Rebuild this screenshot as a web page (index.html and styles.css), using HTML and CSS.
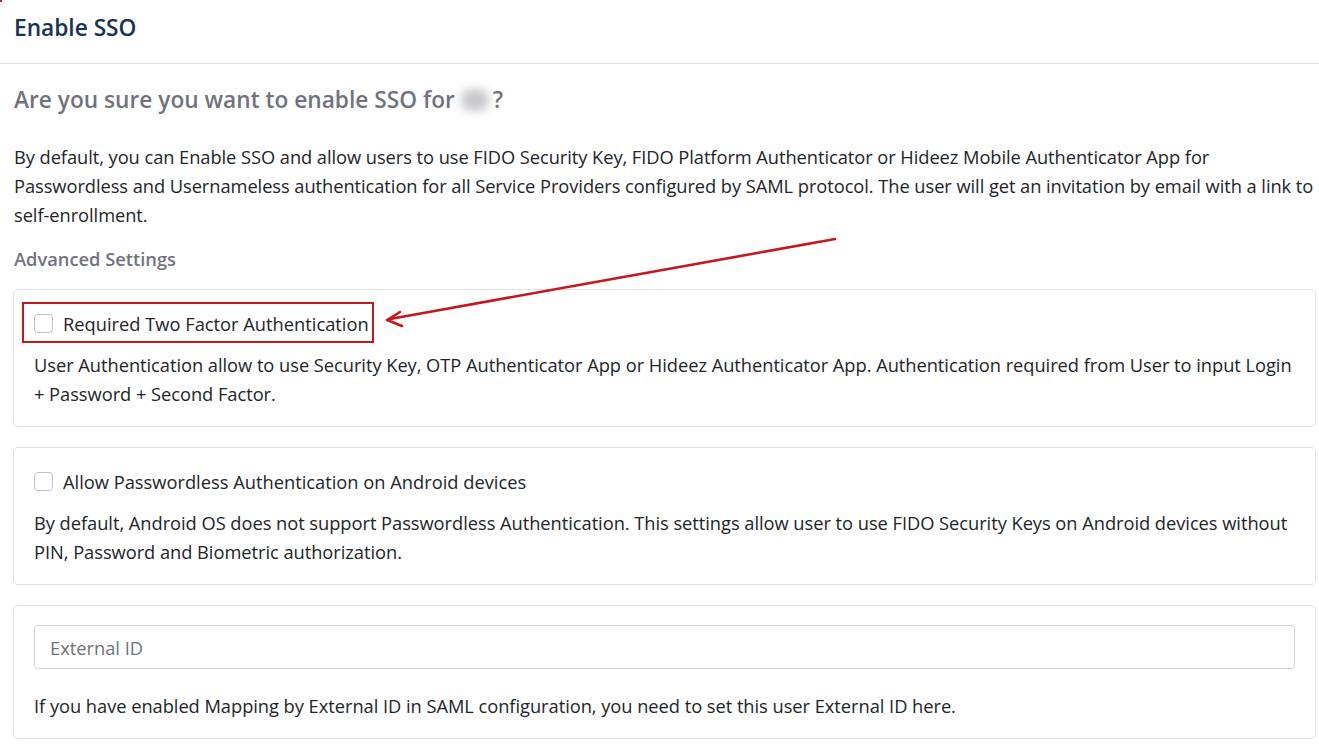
FILE: index.html
```html
<!DOCTYPE html>
<html lang="en">
<head>
<meta charset="utf-8">
<title>Enable SSO</title>
<link rel="stylesheet" href="styles.css">
</head>
<body>
<div class="dialog">
  <header class="dialog-header">
    <h1 class="dialog-title">Enable SSO</h1>
  </header>
  <main class="dialog-body">
    <h2 class="question">Are you sure you want to enable SSO for<span class="blurred" aria-hidden="true"></span>?</h2>
    <p class="intro">By default, you can Enable SSO and allow users to use FIDO Security Key, FIDO Platform Authenticator or Hideez Mobile Authenticator App for Passwordless and Usernameless authentication for all Service Providers configured by SAML protocol. The user will get an invitation by email with a link to self-enrollment.</p>
    <h3 class="section-title">Advanced Settings</h3>

    <section class="card">
      <label class="check-row">
        <span class="checkbox"></span>
        <span class="check-label">Required Two Factor Authentication</span>
        <span class="highlight"></span>
      </label>
      <p class="card-text">User Authentication allow to use Security Key, OTP Authenticator App or Hideez Authenticator App. Authentication required from User to input Login + Password + Second Factor.</p>
    </section>

    <section class="card">
      <label class="check-row">
        <span class="checkbox"></span>
        <span class="check-label">Allow Passwordless Authentication on Android devices</span>
      </label>
      <p class="card-text">By default, Android OS does not support Passwordless Authentication. This settings allow user to use FIDO Security Keys on Android devices without PIN, Password and Biometric authorization.</p>
    </section>

    <section class="card card-input">
      <input class="text-input" type="text" placeholder="External ID">
      <p class="card-text">If you have enabled Mapping by External ID in SAML configuration, you need to set this user External ID here.</p>
    </section>
  </main>
  <svg class="arrow" width="1319" height="754" viewBox="0 0 1319 754" aria-hidden="true">
    <line x1="835" y1="239" x2="390" y2="319" stroke="#c8161d" stroke-width="2.6" stroke-linecap="round"/>
    <path d="M400 312 L387 320 L402 326" fill="none" stroke="#c8161d" stroke-width="2.6" stroke-linecap="round" stroke-linejoin="round"/>
  </svg>
  <span class="corner-mark"></span>
</div>
</body>
</html>
```

FILE: styles.css
```css
* { box-sizing: border-box; }
html, body {
  margin: 0;
  padding: 0;
  background: #fff;
}
body {
  font-family: "Open Sans", "Noto Sans", sans-serif;
  color: #212529;
  font-size: 18.3px;
  line-height: 29px;
}
.dialog {
  position: relative;
  width: 1319px;
  min-height: 754px;
  overflow: hidden;
}
.dialog-header {
  height: 64px;
  border-bottom: 1px solid #dee2e6;
  display: flex;
  align-items: center;
  padding: 0 14px 8px;
}
.dialog-title {
  margin: 0;
  font-size: 22.7px;
  font-weight: 600;
  color: #16325c;
  line-height: 1.2;
}
.dialog-body {
  padding: 19px 0 0 13px;
}
.question {
  margin: 0 0 0 1px;
  font-size: 22.7px;
  font-weight: 600;
  color: #70737f;
  line-height: 33px;
}
.blurred {
  display: inline-block;
  background: #c8c8cc;
  width: 28px;
  height: 22px;
  margin: 0 4px 0 6px;
  border-radius: 10px;
  vertical-align: -3px;
  filter: blur(5px);
}
.intro {
  margin: 26px 0 0 1px;
  letter-spacing: -0.06px;
}
.section-title {
  margin: 15px 0 0 1px;
  font-size: 18.3px;
  font-weight: 600;
  color: #70737f;
  line-height: 29px;
}
.card {
  margin: 16px 3px 0 0;
  border: 1px solid #dfe1e4;
  border-radius: 5px;
  padding: 19px 12px 18px 20px;
}
.card + .card { margin-top: 20px; }
.check-row {
  position: relative;
  display: flex;
  align-items: center;
  gap: 10px;
}
.checkbox {
  width: 19px;
  height: 19px;
  border: 1px solid #bfc3c8;
  border-radius: 4px;
  background: #fff;
  flex: none;
}
.check-label { color: #212529; }
.highlight {
  position: absolute;
  left: -12px;
  top: -7px;
  width: 352px;
  height: 41px;
  border: 2px solid #c8161d;
  pointer-events: none;
}
.card-text {
  margin: 12px 0 0;
  letter-spacing: -0.04px;
}
.card-input { padding-top: 19px; padding-bottom: 18px; }
.text-input {
  display: block;
  width: calc(100% - 8px);
  height: 44px;
  border: 1px solid #ced4da;
  border-radius: 4px;
  padding: 0 15px;
  font: inherit;
  color: #495057;
}
.text-input::placeholder { color: #6c757d; }
.card-input .card-text { margin-top: 22px; }
.arrow {
  position: absolute;
  left: 0;
  top: 0;
  pointer-events: none;
}
.corner-mark {
  position: absolute;
  left: 0;
  top: 0;
  width: 2px;
  height: 2px;
  background: #c8161d;
}
```
